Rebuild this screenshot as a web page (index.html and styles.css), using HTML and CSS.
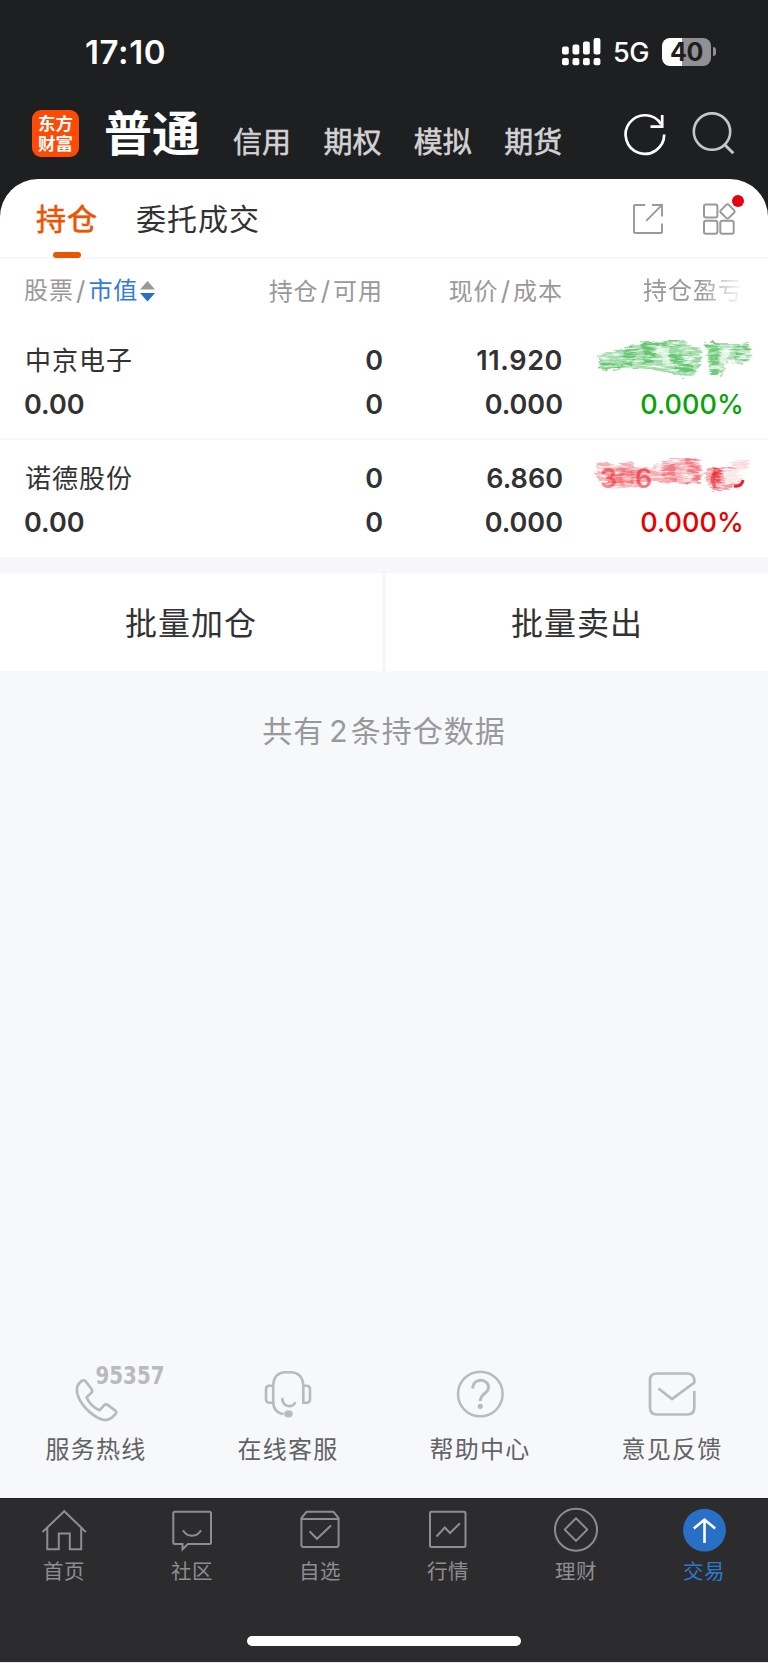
FILE: index.html
```html
<!DOCTYPE html>
<html lang="zh-CN">
<head>
<meta charset="utf-8">
<title>持仓</title>
<link rel="stylesheet" href="styles.css">
</head>
<body>
<div class="app">
  <header class="top">
    <div class="status">
      <span class="time">17:10</span>
      <div class="status-right">
        <svg class="signal" width="39" height="28" viewBox="0 0 39 28" fill="#fff">
          <rect x="0" y="8.5" width="6.8" height="8" rx="2"/><rect x="10.5" y="6.5" width="6.8" height="10" rx="2"/><rect x="21" y="3.5" width="6.8" height="13" rx="2"/><rect x="31.6" y="0" width="6.8" height="16.5" rx="2"/>
          <rect x="0" y="20" width="6.8" height="7.2" rx="2"/><rect x="10.5" y="20" width="6.8" height="7.2" rx="2"/><rect x="21" y="20" width="6.8" height="7.2" rx="2"/><rect x="31.6" y="20" width="6.8" height="7.2" rx="2"/>
        </svg>
        <span class="net">5G</span>
        <span class="battery">40</span><i class="nub"></i>
      </div>
    </div>
    <nav class="modes">
      <div class="logo"><span>东方</span><span>财富</span></div>
      <span class="mode-main">普通</span>
      <div class="mode-list"><span>信用</span><span>期权</span><span>模拟</span><span>期货</span></div>
      <svg class="ico-refresh" width="44" height="44" viewBox="0 0 44 44" fill="none" stroke="#fff" stroke-width="2.7">
        <path d="M41.2 22.6A19.3 19.3 0 1 1 38.2 12.2"/><path d="M27.5 14.6H39.2V3"/>
      </svg>
      <svg class="ico-search" width="44" height="44" viewBox="0 0 44 44" fill="none" stroke="#c6c6c8" stroke-width="2.6">
        <circle cx="20" cy="19.6" r="18.2"/><path d="M32 32L41.3 41.3" stroke-width="3"/>
      </svg>
    </nav>
  </header>

  <main class="panel">
    <div class="tabs">
      <span class="tab tab-on">持仓</span>
      <span class="tab">委托成交</span>
      <svg class="ico-share" width="30" height="30" viewBox="0 0 30 30" fill="none" stroke="#999" stroke-width="1.9">
        <path d="M12.2 1H2Q1 1 1 2V28Q1 29 2 29H28Q29 29 29 28V19.5M19 1H29V12.5M13.2 16.8L28.6 1.4"/>
      </svg>
      <div class="grid-icon">
        <svg width="33" height="32" viewBox="0 0 33 32" fill="none" stroke="#999" stroke-width="2">
          <rect x="1" y="1.5" width="13.4" height="13" rx="2"/><rect x="1" y="17.8" width="13.4" height="13" rx="2"/><rect x="17.3" y="17.8" width="13.4" height="13" rx="2"/>
          <path d="M23.2 1.9Q24.5.6 25.8 1.9L31 7.1Q32.3 8.4 31 9.7L25.8 14.9Q24.5 16.2 23.2 14.9L18 9.7Q16.7 8.4 18 7.1Z"/>
        </svg>
        <i class="dot"></i>
      </div>
    </div>

    <div class="cols head">
      <div class="c1">股票<b>/</b><em>市值</em><svg width="15" height="21" viewBox="0 0 15 21"><path d="M7.5 0L15 8.6H0Z" fill="#999"/><path d="M0 12H15L7.5 20.5Z" fill="#2a6fc6"/></svg></div>
      <div class="c2">持仓<b>/</b>可用</div>
      <div class="c3">现价<b>/</b>成本</div>
      <div class="c4 fade">持仓盈亏</div>
    </div>

    <section class="stock">
      <div class="cols line"><div class="c1 name">中京电子</div><div class="c2">0</div><div class="c3 wide">11.920</div>
        <div class="c4"><svg class="smudge" width="162" height="44" viewBox="0 0 162 44">
          <defs>
            <filter id="grain" x="-5%" y="-15%" width="110%" height="130%">
              <feTurbulence type="fractalNoise" baseFrequency="0.07 0.4" numOctaves="4" seed="7" result="n"/>
              <feDisplacementMap in="SourceGraphic" in2="n" scale="9" xChannelSelector="R" yChannelSelector="A" result="d"/>
              <feColorMatrix in="n" type="matrix" values="0 0 0 0 0  0 0 0 0 0  0 0 0 0 0  0 2.6 0 0 -0.5" result="m"/>
              <feComposite in="d" in2="m" operator="in" result="g"/>
              <feGaussianBlur in="g" stdDeviation=".6"/>
            </filter>
          </defs>
          <g filter="url(#grain)" fill="#39b54a">
            <path opacity=".5" d="M4 16L22 12L42 7L70 3L89 4L106 12L105 29L98 38L80 38L66 32L42 30L4 32Z"/>
            <path opacity=".55" d="M30 10H43L38 29H26Z M50 9H62L58 25H48Z M74 17L95 15L99 34H82Z M5 26L25 27V32H5Z M45 4L82 3L88 7L48 12Z"/>
            <path opacity=".45" d="M110 5H154L157 18L147 27L133 22L127 37L116 38Z"/>
            <path opacity=".5" d="M111 5H124L123 38H117Z M138 7H154L151 22H142Z"/>
            <path fill="#fff" opacity=".6" d="M65 11L74 10L75 26L68 27Z M127 10H136L131 25H124Z"/>
          </g></svg></div></div>
      <div class="cols line2"><div class="c1">0.00</div><div class="c2">0</div><div class="c3">0.000</div><div class="c4 green">0.000%</div></div>
    </section>
    <section class="stock">
      <div class="cols line"><div class="c1 name">诺德股份</div><div class="c2">0</div><div class="c3">6.860</div>
        <div class="c4"><svg class="smudge" width="162" height="44" viewBox="0 0 162 44">
          <g filter="url(#grain)" fill="#ee3740">
            <path opacity=".42" d="M2 7L37 7L40 11L56 13L61 8L74 4L107 3L105 28L71 28L58 25L35 32L16 31L1 23Z"/>
            <path opacity=".4" d="M8 13L45 13L44 26L11 28Z M65 10L81 7L81 27L66 21Z M90 4H104V27H91Z"/>
            <path opacity=".5" d="M111 11L140 11L146 26L133 34H118L110 22Z"/>
            <path opacity=".75" d="M117 13H126L125 31H119Z"/>
            <path opacity=".2" d="M137 4H155L150 15H133Z"/>
            <path fill="#fff" opacity=".75" d="M128 16L142 13L145 27L130 26Z"/>
          </g>
          <text x="5" y="31.5" class="under" opacity=".5">3</text><text x="23" y="31.5" class="under" opacity=".15">0</text><text x="40" y="31.5" class="under" opacity=".6">6</text>
          <path d="M121 15Q115 23 120 31" fill="none" stroke="#ee2028" stroke-width="4" opacity=".6"/>
          <path d="M139 30Q147 31 148 24" fill="none" stroke="#ee2028" stroke-width="3"/>
        </svg></div></div>
      <div class="cols line2"><div class="c1">0.00</div><div class="c2">0</div><div class="c3">0.000</div><div class="c4 red">0.000%</div></div>
    </section>

    <div class="batch"><div>批量加仓</div><div>批量卖出</div></div>
    <p class="count">共有<b>2</b>条持仓数据</p>

    <div class="services">
      <div class="svc">
        <svg width="96" height="60" viewBox="0 0 96 60" fill="none" stroke="#b9babc" stroke-width="2.7" stroke-linejoin="round">
          <path d="M33.5 16.2Q36.4 14.2 38.2 17L43.5 24Q45.1 26.5 43 28.3L38.6 32.2C41.2 38.5 46.5 43 51.5 45.3L56 40.4Q57.7 38.7 60 40.2L67 45.3Q69.3 47.1 67.4 49.2C64 53.5 58.5 56.5 52.5 54C42 49.5 31 38 29.1 27.5C28.2 22.5 30 18.7 33.5 16.2Z"/>
          <text x="47.5" y="19" class="hotline" textLength="69" lengthAdjust="spacingAndGlyphs">95357</text>
        </svg>
        <span>服务热线</span>
      </div>
      <div class="svc">
        <svg width="96" height="60" viewBox="0 0 96 60" fill="none" stroke="#b9babc" stroke-width="2.6">
          <path d="M43.5 49C36 48 33.2 43 33.2 36V22Q33.2 7.3 46 7.3H50Q63.3 7.3 63.3 22V38M33 20.8H29.5Q26 20.8 26 24.3V34.2Q26 37.7 29.5 37.7H33M63.3 20.8H66.5Q70 20.8 70 24.3V34.2Q70 37.7 66.5 37.7H62"/>
          <path d="M42.3 32.8C42 43 53.5 43 55.3 37.2"/><ellipse cx="48.5" cy="48.8" rx="4.3" ry="3.6" fill="#b9babc" stroke="none"/>
        </svg>
        <span>在线客服</span>
      </div>
      <div class="svc">
        <svg width="96" height="60" viewBox="0 0 96 60" fill="none" stroke="#b9babc" stroke-width="2.5">
          <circle cx="48.3" cy="29" r="22.3"/><path d="M40.8 23.5C40.8 12.5 56.5 13 56.5 22.5C56.5 28.5 48.3 28.5 48.3 36" stroke-width="3"/><circle cx="48.3" cy="41.3" r="2.6" fill="#b9babc" stroke="none"/>
        </svg>
        <span>帮助中心</span>
      </div>
      <div class="svc">
        <svg width="96" height="60" viewBox="0 0 96 60" fill="none" stroke="#b9babc" stroke-width="2.7">
          <path d="M70.3 26V42.5Q70.3 49.5 63.3 49.5H33Q26 49.5 26 42.5V15Q26 8.5 33 8.5H63Q69.5 8.5 70.3 14.5V17.5L48 34L34.5 23.5"/>
        </svg>
        <span>意见反馈</span>
      </div>
    </div>
  </main>

  <footer class="bar">
    <div class="bar-items">
      <div class="item"><svg width="48" height="48" viewBox="0 0 48 48"><path d="M2.5 25L24.3 4.2L45.8 25M7.3 21V42.3H18.8V26.5H29.8V42.3H41.2V21"/></svg><span>首页</span></div>
      <div class="item"><svg width="48" height="48" viewBox="0 0 48 48"><path d="M6.8 4.8H41.5Q43 4.8 43 6.3V35.5Q43 37 41.5 37H20L14.5 42.3V37H6.8Q5.3 37 5.3 35.5V6.3Q5.3 4.8 6.8 4.8ZM15 23.2C19 30.5 29 30.5 33 23.2"/></svg><span>社区</span></div>
      <div class="item"><svg width="48" height="48" viewBox="0 0 48 48"><path d="M10.5 4.8H37.5L42.6 11V38Q42.6 40 40.6 40H7.4Q5.4 40 5.4 38V11ZM5.4 12H42.6M13.5 24.2L21 31.8L35 18.5"/></svg><span>自选</span></div>
      <div class="item"><svg width="48" height="48" viewBox="0 0 48 48"><rect x="6" y="4.8" width="35.5" height="35.2" rx="1.5"/><path d="M12.5 29.5L20.8 20.5L26 26L36 16.3"/></svg><span>行情</span></div>
      <div class="item"><svg width="48" height="48" viewBox="0 0 48 48"><circle cx="24" cy="22.7" r="21"/><path d="M24 11.3L35.3 22.6L24 33.9L12.7 22.6Z" stroke-linejoin="round"/></svg><span>理财</span></div>
      <div class="item active"><svg width="48" height="48" viewBox="0 0 48 48"><circle class="disc" cx="24.5" cy="23.2" r="21.4"/><path class="arrow" d="M24.5 36V13M13.8 21.5L24.5 12.6L35.2 21.5"/></svg><span>交易</span></div>
    </div>
    <div class="home"></div>
  </footer>
</div>
</body>
</html>
```
FILE: styles.css
```css
* { box-sizing: border-box; }
body { margin: 0; background: #e9e9ea; font-family: Inter, "Noto Sans CJK SC", sans-serif; color: #323233; white-space: nowrap; }
svg { display: block; flex: none; overflow: visible; }
i, em, b { font-style: normal; font-weight: inherit; }
.app { width: 768px; height: 1662px; display: flex; flex-direction: column; background: #1e1f21; }

.top { height: 179px; flex: none; color: #fff; }
.status { height: 98px; padding: 5px 52px 0 85px; display: flex; align-items: center; justify-content: space-between; }
.time { font-size: 33px; font-weight: 600; line-height: 40px; letter-spacing: .6px; padding-top: 1px; }
.status-right { display: flex; align-items: center; }
.net { font-size: 27px; font-weight: 500; line-height: 28px; margin: 2px 0 0 12px; width: 49px; letter-spacing: -.5px; }
.battery { width: 49px; height: 28px; border-radius: 8px; background: linear-gradient(90deg, #fff 40%, #919193 40%); color: #1e1f21; font-size: 25px; font-weight: 700; line-height: 28px; text-align: center; letter-spacing: -.5px; }
.nub { width: 3px; height: 9px; margin-left: 2px; border-radius: 0 5px 5px 0; background: #919193; }
.modes { height: 81px; padding: 0 32px; display: flex; align-items: flex-start; }
.logo { width: 47px; height: 47px; flex: none; margin-top: 12px; border-radius: 9px; background: #ff4a05; display: flex; flex-direction: column; align-items: center; padding-top: 4px; }
.logo span { font-size: 17.5px; font-weight: 700; line-height: 20px; }
.mode-main { flex: none; margin: 8px 0 0 25px; width: 96px; font-size: 48px; font-weight: 700; line-height: 56px; }
.mode-list { flex: none; width: 330px; margin: 27px 0 0 33px; display: flex; gap: 32.4px; color: #d2d2d4; font-size: 29px; line-height: 36px; -webkit-text-stroke: .55px #d2d2d4; }
.ico-refresh { margin: 14px 0 0 60px; }
.ico-search { margin: 14px 0 0 25px; }

.panel { flex: 1; display: flex; flex-direction: column; background: linear-gradient(#fff 0 300px, #f7f8fa 400px); border-radius: 38px 38px 0 0; overflow: hidden; }
.tabs { height: 80px; flex: none; padding: 0 32px 0 36px; border-bottom: 2px solid #f7f7f8; display: flex; align-items: flex-start; font-size: 30px; letter-spacing: 1px; }
.tab { line-height: 81px; }
.tab-on { margin-right: 38px; color: #ea5504; -webkit-text-stroke: .6px #ea5504; display: flex; flex-direction: column; align-items: center; height: 79px; }
.tab-on::after { content: ""; width: 28px; height: 6px; border-radius: 3px; background: #ea5504; margin-top: -8px; }
.ico-share { margin: 25px 0 0 auto; }
.grid-icon { position: relative; margin: 24px 0 0 40px; }
.dot { position: absolute; left: 29px; top: -8px; width: 12px; height: 12px; border-radius: 50%; background: #e60012; }

.cols { display: grid; grid-template-columns: 204px 154px 180px 181px; padding: 0 24px 0 25px; font-size: 27px; font-weight: 600; }
.c2, .c3, .c4 { text-align: right; }
.c1:not(.name) { margin-left: -1px; }
.wide { letter-spacing: .6px; }
.head { height: 70px; flex: none; background: #fff; line-height: 64px; font-size: 24px; font-weight: 400; color: #999; letter-spacing: 1px; }
.head b { margin: 0 2px; font-size: 26px; }
.head em { color: #2f7be0; }
.head .c1 { display: flex; align-items: center; height: 64px; }
.head .c1 svg { margin-left: 2px; }
.head .c4 { padding-right: 1px; }
.fade { -webkit-mask-image: linear-gradient(90deg, #000 76%, transparent 100%); mask-image: linear-gradient(90deg, #000 76%, transparent 100%); }
.stock { height: 111px; padding-top: 9px; background: #fff; border-bottom: 2px solid #f7f7f8; flex: none; }
.stock + .stock { height: 117px; padding-top: 16px; border-bottom: 0; }
.line { height: 45px; line-height: 45px; }
.line2 { height: 44px; line-height: 44px; }
.name { font-weight: 400; font-size: 26px; letter-spacing: 1px; line-height: 46px; }
.line .c4 { display: flex; justify-content: flex-end; }
.smudge { margin-right: -13px; }
.under { font: 600 27px Inter, sans-serif; fill: #ee2028; }
.green { color: #07a307; font-weight: 500; letter-spacing: .1px; }
.red { color: #e60000; font-weight: 500; letter-spacing: .1px; }

.batch { padding-top: 16px; background: #f7f7f9; display: grid; grid-template-columns: 1fr 1fr; gap: 4px; flex: none; }
.batch div { height: 98px; background: #fff; line-height: 101px; text-align: center; font-size: 32px; letter-spacing: 1px; }
.count { margin: 39px 0 0; text-align: center; font-size: 30px; line-height: 42px; letter-spacing: 1px; color: #98999b; }
.count b { margin: 0 2px 0 5px; }

.services { margin-top: auto; height: 133px; display: grid; grid-template-columns: repeat(4, 1fr); }
.svc { display: flex; flex-direction: column; align-items: center; color: #626365; font-size: 24px; letter-spacing: 1.2px; }
.svc span { line-height: 36px; margin-top: 7px; }
.hotline { font: 700 25px "DejaVu Sans Condensed", "DejaVu Sans", sans-serif; letter-spacing: 0; fill: #b9babc; stroke: none; }

.bar { height: 164px; flex: none; background: #2c2c2e; border-top: 1px solid #242426; display: flex; flex-direction: column; align-items: center; }
.bar-items { width: 768px; display: grid; grid-template-columns: repeat(6, 1fr); padding-top: 8px; }
.item { display: flex; flex-direction: column; align-items: center; color: #8e8e91; font-size: 20.5px; letter-spacing: .6px; }
.item svg { fill: none; stroke: #8e8e91; stroke-width: 2; }
.item span { line-height: 28px; margin-top: 3px; }
.item .disc { fill: #2870c6; stroke: none; }
.item .arrow { stroke: #fff; stroke-width: 2.6; }
.active { color: #2f78cf; }
.home { width: 274px; height: 10px; border-radius: 5px; background: #fff; margin-top: 50px; }
```
